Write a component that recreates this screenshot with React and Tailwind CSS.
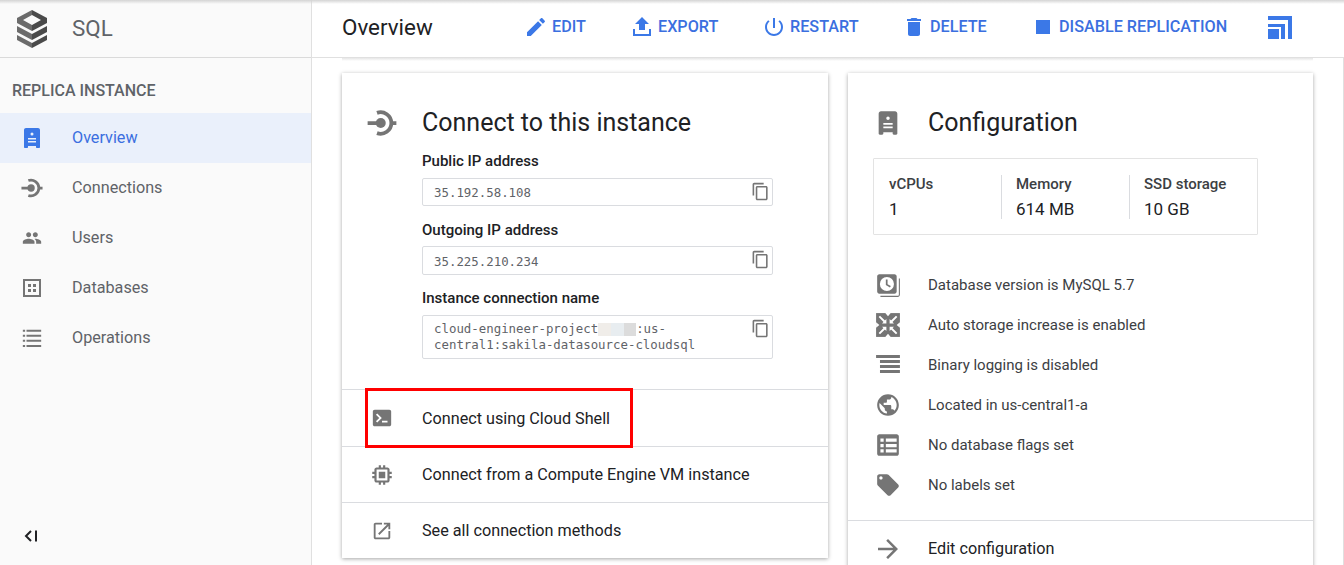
import React from "react";

const Icon = ({ d, size = 24, className = "", rule }) => (
  <svg viewBox="0 0 24 24" width={size} height={size} className={className} fill="currentColor">
    <path d={d} fillRule={rule} />
  </svg>
);

const paths = {
  edit: "M3 17.25V21h3.75L17.81 9.94l-3.75-3.75L3 17.25zM20.71 7.04c.39-.39.39-1.02 0-1.41l-2.34-2.34c-.39-.39-1.02-.39-1.41 0l-1.83 1.83 3.75 3.75 1.83-1.83z",
  export: "M9 15h6V9h4l-7-7-7 7h4zM3 14h2v5h14v-5h2v7H3z",
  power: "M13 3h-2v10h2V3zm4.83 2.17l-1.42 1.42C17.99 7.86 19 9.81 19 12c0 3.87-3.13 7-7 7s-7-3.13-7-7c0-2.19 1.01-4.14 2.58-5.42L6.17 5.17C4.23 6.82 3 9.26 3 12c0 4.97 4.03 9 9 9s9-4.03 9-9c0-2.74-1.23-5.18-3.17-6.83z",
  del: "M6 19c0 1.1.9 2 2 2h8c1.1 0 2-.9 2-2V7H6v12zM19 4h-3.5l-1-1h-5l-1 1H5v2h14V4z",
  stop: "M5 5h14v14H5z",
  copy: "M16 1H4c-1.1 0-2 .9-2 2v14h2V3h12V1zm3 4H8c-1.1 0-2 .9-2 2v14c0 1.1.9 2 2 2h11c1.1 0 2-.9 2-2V7c0-1.1-.9-2-2-2zm0 16H8V7h11v14z",
  people: "M16 11c1.66 0 2.99-1.34 2.99-3S17.66 5 16 5c-1.66 0-3 1.34-3 3s1.34 3 3 3zm-8 0c1.66 0 2.99-1.34 2.99-3S9.66 5 8 5C6.34 5 5 6.34 5 8s1.34 3 3 3zm0 2c-2.33 0-7 1.17-7 3.5V19h14v-2.5c0-2.33-4.67-3.5-7-3.5zm8 0c-.29 0-.62.02-.97.05 1.16.84 1.97 1.97 1.97 3.45V19h6v-2.5c0-2.33-4.67-3.5-7-3.500z",
  list: "M2 3h2.500v2.200H2zM6 3h16v2.200H6zM2 8.500h2.500v2.200H2zM6 8.500h16v2.200H6zM2 14h2.500v2.200H2zM6 14h16v2.200H6zM2 19.500h2.500v2.200H2zM6 19.500h16v2.200H6z",
  open: "M19 19H5V5h7V3H5c-1.11 0-2 .9-2 2v14c0 1.1.89 2 2 2h14c1.1 0 2-.9 2-2v-7h-2v7zM14 3v2h3.59l-9.83 9.83 1.41 1.41L19 6.41V10h2V3h-7z",
  arrow: "M12 4l-1.41 1.41L16.17 11H4v2h12.17l-5.58 5.59L12 20l8-8z",
  globe: "M12 2C6.48 2 2 6.48 2 12s4.48 10 10 10 10-4.48 10-10S17.52 2 12 2zm-1 17.93c-3.95-.49-7-3.86-7-7.93 0-.62.08-1.21.21-1.79L9 15v1c0 1.1.9 2 2 2v1.93zm6.9-2.54c-.26-.81-1-1.39-1.9-1.39h-1v-3c0-.55-.45-1-1-1H8v-2h2c.55 0 1-.45 1-1V7h2c1.1 0 2-.9 2-2v-.41c2.93 1.19 5 4.06 5 7.41 0 2.08-.8 3.97-2.1 5.39z",
  tag: "M21.41 11.58l-9-9C12.05 2.22 11.55 2 11 2H4c-1.1 0-2 .9-2 2v7c0 .55.22 1.05.59 1.42l9 9c.36.36.86.58 1.41.58.55 0 1.05-.22 1.41-.59l7-7c.37-.36.59-.86.59-1.41 0-.55-.23-1.06-.59-1.42zM5.5 7C4.67 7 4 6.33 4 5.5S4.67 4 5.5 4 7 4.67 7 5.5 6.33 7 5.5 7z",
  chip: "M15 9H9v6h6V9zM21 11V9h-2V7c0-1.1-.9-2-2-2h-2V3h-2v2h-2V3H9v2H7c-1.1 0-2 .9-2 2v2H3v2h2v2H3v2h2v2c0 1.1.9 2 2 2h2v2h2v-2h2v2h2v-2h2c1.1 0 2-.9 2-2v-2h2v-2h-2v-2h2zm-4 6H7V7h10v10z",
  instance: "M6 2h12c1.1 0 2 .9 2 2v17c0 .6-.4 1-1 1h-2c-.6 0-1-.4-1-1v-1H8v1c0 .6-.4 1-1 1H5c-.6 0-1-.4-1-1V4c0-1.1.9-2 2-2zm6 4.5a1.5 1.5 0 1 0 0 3 1.5 1.5 0 0 0 0-3zM8 12v1.5h8V12H8zm0 3v1.5h8V15H8z",
  database: "M3 3h18v18H3zM5 5v14h14V5zM8 8h3v3H8zM13 8h3v3h-3zM8 13h3v3H8zM13 13h3v3h-3z",
  terminal: "M4 3h16c1.100 0 2 .9 2 2v14c0 1.100-.9 2-2 2H4c-1.100 0-2-.9-2-2V5c0-1.100.9-2 2-2zm1.400 5.400L9 12l-3.600 3.600L6.800 17l5-5-5-5zM12 15v2h6v-2z",
  version: "M4 2h14c1.100 0 2 .9 2 2v14c0 1.100-.9 2-2 2H4c-1.100 0-2-.9-2-2V4c0-1.100.9-2 2-2zm7 2.500a6.500 6.500 0 1 0 0 13 6.500 6.500 0 0 0 0-13zM10 7h1.600v4.200l3 1.800-.8 1.300L10 12zM22 6h1v15c0 1.100-.9 2-2 2H5v-1h16c.6 0 1-.4 1-1z",
  logs: "M1 2.800h22v2.700H1zM4.600 7.400H23v2.800H4.600zM4.600 12H23v2.800H4.600zM4.600 16.600H23v2.800H4.600z",
  flags: "M4 2h16c1.100 0 2 .9 2 2v16c0 1.100-.9 2-2 2H4c-1.100 0-2-.9-2-2V4c0-1.100.9-2 2-2zM5 6v3h3V6zM10 6v3h10V6zM5 11v3h3v-3zM10 11v3h10v-3zM5 16v3h3v-3zM10 16v3h10v-3z",
};

const SqlLogo = () => (
  <svg viewBox="0 0 30 38" width="30" height="38">
    <path fill="#6b6b6b" fillRule="evenodd" d="M15 0v5L6 10l9 5v6L0 13V8z" />
    <path fill="#4a4a4a" fillRule="evenodd" d="M15 0l15 8v5l-15 8v-6l9-5-9-5z" />
    <path fill="#6b6b6b" d="M0 16l15 8v6L0 22z" />
    <path fill="#4a4a4a" d="M30 16l-15 8v6l15-8z" />
    <path fill="#6b6b6b" d="M0 25l15 8v5L0 30z" />
    <path fill="#4a4a4a" d="M30 25l-15 8v5l15-8z" />
  </svg>
);

const ConnectionIcon = ({ size = 24, className = "" }) => (
  <svg viewBox="0 0 24 24" width={size} height={size} className={className} fill="none" stroke="currentColor" strokeWidth="3">
    <circle cx="11" cy="12" r="4" fill="currentColor" stroke="none" />
    <path d="M0.500 12H8M18 12h5.500M8 3.900A8.600 8.600 0 1 1 8 20.100" />
  </svg>
);

const StorageIcon = ({ size = 24, className = "" }) => (
  <svg viewBox="0 0 24 24" width={size} height={size} className={className}>
    <path fill="currentColor" d="M1 1h22v22H1z" />
    <path fill="none" stroke="white" strokeWidth="1.800" d="M4 4l5 5M20 4l-5 5M4 20l5-5M20 20l-5-5" />
    <path fill="white" d="M10.500 10.500H6.500l4-4zM13.500 10.500h4l-4-4zM10.500 13.500H6.500l4 4zM13.500 13.500h4l-4 4zM9.500 1h5L12 4zM9.500 23h5L12 20zM1 9.500v5L4 12zM23 9.500v5L20 12z" />
  </svg>
);

const TabsIcon = () => (
  <svg viewBox="0 0 24 23" width="24" height="23" fill="#3b78e7">
    <path d="M0 0h24v23h-4V4H0zM0 8h17v15h-4V11H0zM0 13h11v10H0z" />
  </svg>
);

const navItems = [
  { label: "Overview", icon: <Icon d={paths.instance} size={24} />, active: true },
  { label: "Connections", icon: <ConnectionIcon size={22} /> },
  { label: "Users", icon: <Icon d={paths.people} size={20} /> },
  { label: "Databases", icon: <Icon d={paths.database} size={24} /> },
  { label: "Operations", icon: <Icon d={paths.list} size={22} /> },
];

const actions = [
  { label: "EDIT", icon: paths.edit, cls: "w-[106px]" },
  { label: "EXPORT", icon: paths.export, cls: "w-[132px]" },
  { label: "RESTART", icon: paths.power, cls: "w-[140px]" },
  { label: "DELETE", icon: paths.del, cls: "w-[129px]" },
  { label: "DISABLE REPLICATION", icon: paths.stop, cls: "w-[237px]" },
];

const configRows = [
  { label: "Database version is MySQL 5.7", icon: <Icon d={paths.version} size={26} rule="evenodd" /> },
  { label: "Auto storage increase is enabled", icon: <StorageIcon size={26} /> },
  { label: "Binary logging is disabled", icon: <Icon d={paths.logs} size={26} /> },
  { label: "Located in us-central1-a", icon: <Icon d={paths.globe} size={26} /> },
  { label: "No database flags set", icon: <Icon d={paths.flags} size={26} rule="evenodd" /> },
  { label: "No labels set", icon: <Icon d={paths.tag} size={26} /> },
];

const stats = [
  { label: "vCPUs", value: "1" },
  { label: "Memory", value: "614 MB" },
  { label: "SSD storage", value: "10 GB" },
];

const CopyField = ({ heightClass, children }) => (
  <div className={`relative ${heightClass} w-[351px] rounded-[2px] border border-[#dadce0] pl-[11px] pr-10 font-['DejaVu_Sans_Mono',monospace] text-[12.4px] leading-4 text-[#5f6368]`}>
    {children}
    <Icon d={paths.copy} size={19} className="absolute right-[2px] top-[3px] text-[#757575]" />
  </div>
);

const ConnectRow = ({ icon, label, heightClass }) => (
  <div className={`flex ${heightClass} items-center border-t border-[#dadce0] text-[16.2px] text-[#202124]`}>
    <div className="flex w-20 justify-center text-[#757575]">{icon}</div>
    {label}
  </div>
);

export default function App() {
  return (
    <div className="relative flex h-[565px] w-[1344px] overflow-hidden bg-white font-['Roboto',sans-serif]">
      {/* top edge shadow */}
      <div className="absolute inset-x-0 top-0 h-[4px] bg-gradient-to-b from-[#d4d4d4] to-transparent" />

      {/* Sidebar */}
      <aside className="flex w-[312px] shrink-0 flex-col border-r border-[#e0e0e0] bg-[#fafafa]">
        <div className="flex h-[58px] shrink-0 items-center border-b border-[#dadada] pl-[17px]">
          <SqlLogo />
          <span className="ml-[25px] text-[22.4px] text-[#5f6368]">SQL</span>
        </div>
        <div className="flex h-[55px] shrink-0 items-center pl-3 pt-[10px] text-[16px] font-medium text-[#5f6368]">REPLICA INSTANCE</div>
        <nav>
          {navItems.map((item) => (
            <div
              key={item.label}
              className={item.active ? "flex h-[50px] items-center bg-[#eaf0fb] text-[16.2px] text-[#3b6fe0]" : "flex h-[50px] items-center text-[16.2px] text-[#5f6368]"}
            >
              <div className={item.active ? "mr-2 flex w-16 justify-center text-[#3b78e7]" : "mr-2 flex w-16 justify-center text-[#757575]"}>{item.icon}</div>
              {item.label}
            </div>
          ))}
        </nav>
        <div className="mt-auto flex h-[58px] items-center pl-[23px] text-[#202124]">
          <svg viewBox="0 0 16 16" width="16" height="16" fill="none" stroke="currentColor" strokeWidth="2">
            <path d="M8 3L3 8l5 5M13 2.500v11" />
          </svg>
        </div>
      </aside>

      {/* Main */}
      <main className="flex min-w-0 flex-1 flex-col">
        <header className="flex h-[58px] shrink-0 items-center border-b border-[#e0e0e0] pb-[2px] pl-[30px]">
          <h1 className="w-[182px] text-[22.4px] font-normal text-[#202124]">Overview</h1>
          {actions.map((a) => (
            <div key={a.label} className={`flex items-center gap-1 text-[16.2px] font-medium text-[#3b6fe0] ${a.cls}`}>
              <Icon d={a.icon} size={24} className="text-[#3b78e7]" />
              <span>{a.label}</span>
            </div>
          ))}
          <TabsIcon />
        </header>

        <div className="flex-1 border-r border-[#e0e0e0] pl-[30px]">
          {/* edge of the card scrolled out above */}
          <div className="h-[3px] w-[971px] bg-gradient-to-b from-[#e6e6e6] to-transparent" />
          <div className="flex items-start gap-5 pt-3">
            {/* Connect card */}
            <section className="relative h-[485px] w-[486px] shrink-0 bg-white shadow-[0_1px_4px_rgba(0,0,0,0.35)]">
              <div className="flex h-[316px] flex-col">
                <div className="flex h-[74px] shrink-0 items-center pt-[26px]">
                  <div className="flex w-20 justify-center text-[#757575]"><ConnectionIcon size={30} /></div>
                  <h2 className="text-[25px] font-normal text-[#202124]">Connect to this instance</h2>
                </div>
                <div className="pl-20">
                  <div className="mt-[6px] mb-[9px] text-[15px] leading-4 font-medium text-[#202124]">Public IP address</div>
                  <CopyField heightClass="h-[28px] pt-[6px]">35.192.58.108</CopyField>
                  <div className="mt-[16px] mb-[8px] text-[15px] leading-4 font-medium text-[#202124]">Outgoing IP address</div>
                  <CopyField heightClass="h-[29px] pt-[7px]">35.225.210.234</CopyField>
                  <div className="mt-[15px] mb-[9px] text-[15px] leading-4 font-medium text-[#202124]">Instance connection name</div>
                  <CopyField heightClass="h-[44px] pt-[5px]">
                    cloud-engineer-project
                    <span className="inline-block h-[13px] w-[13px] bg-[#f0ede9] align-middle" />
                    <span className="inline-block h-[13px] w-[13px] bg-[#e8edf0] align-middle" />
                    <span className="inline-block h-[13px] w-[12px] bg-[#dcdcdc] align-middle" />
                    :us-
                    <br />
                    central1:sakila-datasource-cloudsql
                  </CopyField>
                </div>
              </div>
              <ConnectRow heightClass="h-[57px] pt-[2px]" icon={<Icon d={paths.terminal} size={22} className="-mt-[3px]" />} label="Connect using Cloud Shell" />
              <ConnectRow heightClass="h-14 pt-[1px]" icon={<Icon d={paths.chip} size={26} rule="evenodd" />} label="Connect from a Compute Engine VM instance" />
              <ConnectRow heightClass="h-14 pt-[1px]" icon={<Icon d={paths.open} size={22} />} label="See all connection methods" />
              <div className="pointer-events-none absolute left-[23px] top-[315px] h-[60px] w-[268px] border-[3px] border-[#ff0000]" />
            </section>

            {/* Configuration card */}
            <section className="h-[600px] w-[465px] shrink-0 bg-white shadow-[0_1px_4px_rgba(0,0,0,0.35)]">
              <div className="flex h-[74px] items-center pt-[26px]">
                <div className="flex w-20 justify-center text-[#757575]"><Icon d={paths.instance} size={28} /></div>
                <h2 className="text-[25px] font-normal text-[#202124]">Configuration</h2>
              </div>
              <div className="mx-[25px] mt-[11px] flex h-[77px] w-[385px] items-center rounded-[1px] border border-[#e3e3e3]">
                {stats.map((s, i) => (
                  <div key={s.label} className={i === 0 ? "h-[44px] w-[127px] pl-[15px]" : "h-[44px] w-[128px] border-l border-[#dadce0] pl-[14px]"}>
                    <div className="-mt-[1px] text-[15px] leading-[20px] font-medium text-[#3c4043]">{s.label}</div>
                    <div className="mt-[5px] text-[17px] leading-[20px] text-[#202124]">{s.value}</div>
                  </div>
                ))}
              </div>
              <div className="mt-[30px]">
                {configRows.map((r) => (
                  <div key={r.label} className="flex h-10 items-center text-[15px] text-[#3c4043]">
                    <div className="flex w-20 justify-center text-[#757575]">{r.icon}</div>
                    <span>{r.label}</span>
                  </div>
                ))}
              </div>
              <div className="mt-[15px] flex h-14 items-center border-t border-[#dadce0] text-[16.2px] text-[#202124]">
                <div className="flex w-20 justify-center text-[#757575]"><Icon d={paths.arrow} size={30} /></div>
                <span className="pt-[2px]">Edit configuration</span>
              </div>
            </section>
          </div>
        </div>
      </main>
    </div>
  );
}
